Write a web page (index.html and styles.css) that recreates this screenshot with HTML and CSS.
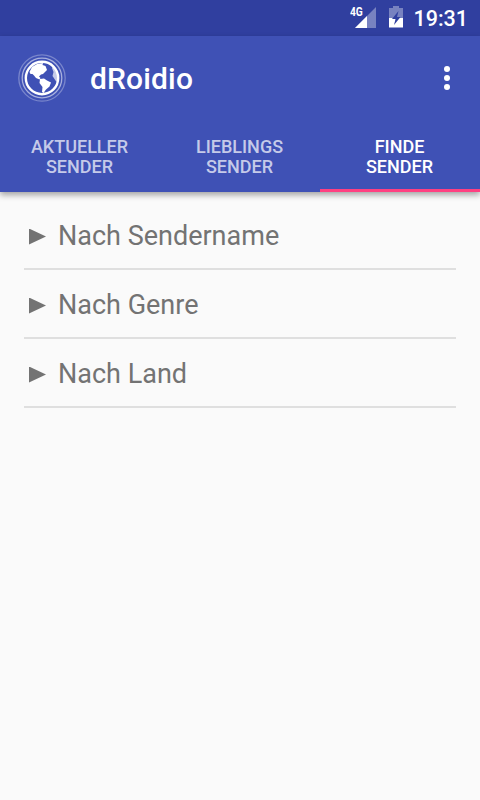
FILE: index.html
```
<!DOCTYPE html>
<html lang="de">
<head>
  <meta charset="UTF-8">
  <meta name="viewport" content="width=device-width, initial-scale=1.0">
  <title>dRoidio</title>
  <link rel="stylesheet" href="styles.css">
</head>
<body>
  <div class="status-bar">
    <span class="network">4G</span>
    <svg class="signal" width="21" height="21" viewBox="0 0 21 21">
      <path d="M21 0V21H0Z" fill="#fff" fill-opacity="0.35"/>
      <path d="M12 9V21H0Z" fill="#fff"/>
    </svg>
    <svg class="battery" width="14" height="22" viewBox="0 0 14 22">
      <path d="M4 0H10V2H14V12H0V2H4Z" fill="#fff" fill-opacity="0.35"/>
      <path d="M0 12H14V21.500H0Z" fill="#fff"/>
      <path d="M9.500 5L3 13H6.500L5 19L11.500 11H8Z" fill="#303f9f"/>
    </svg>
    <span class="clock">19:31</span>
  </div>

  <header class="app-bar">
    <div class="toolbar">
      <svg class="logo" width="48" height="48" viewBox="0 0 48 48">
        <circle cx="24" cy="24" r="23.200" fill="none" stroke="#fff" stroke-opacity="0.3" stroke-width="1.300"/>
        <circle cx="24" cy="24" r="19.800" fill="none" stroke="#fff" stroke-opacity="0.55" stroke-width="1.300"/>
        <circle cx="24" cy="24" r="16.200" fill="none" stroke="#fff" stroke-width="2.400"/>
        <path d="M11.500 18L14 13L19 10L25 9L24.500 11L27.500 12L29 16L27 18L25 20L23 20.500L21 22.500L22.500 24L21.500 25.500L18 24L16 21.500L14.500 20L12.500 20Z" fill="#fff"/>
        <path d="M22 25L26 24.500L29 26.500L33 28.500L31.500 32.500L28 35.500L25.500 39L24 38L24.500 33L21.500 29Z" fill="#fff"/>
        <path d="M35 12L39.500 18L40 25L38.500 28L36.500 25L34.500 22L35.500 18L34 14Z" fill="#fff" fill-opacity="0.7"/>
      </svg>
      <h1>dRoidio</h1>
      <button class="menu" aria-label="Menü"><i></i><i></i><i></i></button>
    </div>
    <nav class="tabs">
      <a class="tab">AKTUELLER<br>SENDER</a>
      <a class="tab">LIEBLINGS<br>SENDER</a>
      <a class="tab active">FINDE<br>SENDER</a>
    </nav>
  </header>

  <main class="list">
    <div class="item"><span class="arrow"></span>Nach Sendername</div>
    <div class="item"><span class="arrow"></span>Nach Genre</div>
    <div class="item"><span class="arrow"></span>Nach Land</div>
  </main>
</body>
</html>
```
FILE: styles.css
```
*, *::before, *::after {
  box-sizing: border-box;
}

:root {
  --primary: #3f51b5;
  --primary-dark: #303f9f;
  --accent: #ff4081;
  --bg-color: #fafafa;
  --text-color: #737373;
}

body {
  font-family: Roboto, sans-serif;
  background-color: var(--bg-color);
  color: var(--text-color);
  margin: 0;
  min-height: 100vh;
}

.status-bar {
  display: flex;
  height: 36px;
  padding: 0 12px 0 0;
  justify-content: flex-end;
  align-items: flex-start;
  background-color: var(--primary-dark);
  color: #fff;
}

.network {
  font-size: 12px;
  font-weight: 700;
  line-height: 14px;
  margin-top: 5px;
  width: 5px;
  transform: scaleX(0.85);
  transform-origin: left;
}

.signal {
  margin-top: 7px;
}

.battery {
  margin: 6px 10px 0 13px;
}

.clock {
  font-size: 21.500px;
  font-weight: 500;
  line-height: 38px;
}

.app-bar {
  height: 156px;
  background-color: var(--primary);
  color: #fff;
  box-shadow: 0 3px 6px rgba(0,0,0,0.35);
}

.toolbar {
  display: flex;
  align-items: center;
  height: 84px;
  padding: 0 15px 0 18px;
}

h1 {
  font-size: 30px;
  font-weight: 500;
  line-height: 36px;
  letter-spacing: 0.15px;
  margin: 2px 0 0 24px;
}

.menu {
  display: flex;
  flex-direction: column;
  align-items: center;
  gap: 3px;
  width: 36px;
  margin-left: auto;
  padding: 0;
  border: none;
  background: none;
}

.menu i {
  width: 6px;
  height: 6px;
  border-radius: 50%;
  background-color: #fff;
}

.tabs {
  display: flex;
  height: 72px;
}

.tab {
  flex: 1;
  padding: 17px 1px 0 0;
  font-size: 18px;
  font-weight: 500;
  line-height: 20px;
  text-align: center;
  color: #c5cae9;
}

.tab.active {
  color: #fff;
  border-bottom: 3px solid var(--accent);
}

.list {
  padding: 9px 24px;
}

.item {
  display: flex;
  align-items: center;
  height: 69px;
  padding: 2px 0 0 5px;
  border-bottom: 2px solid #dfdfdf;
  font-size: 27px;
}

.arrow {
  width: 17px;
  height: 16px;
  margin: 2px 12px 0 0;
  background-color: var(--text-color);
  clip-path: polygon(0 0, 100% 50%, 0 100%);
}
```
